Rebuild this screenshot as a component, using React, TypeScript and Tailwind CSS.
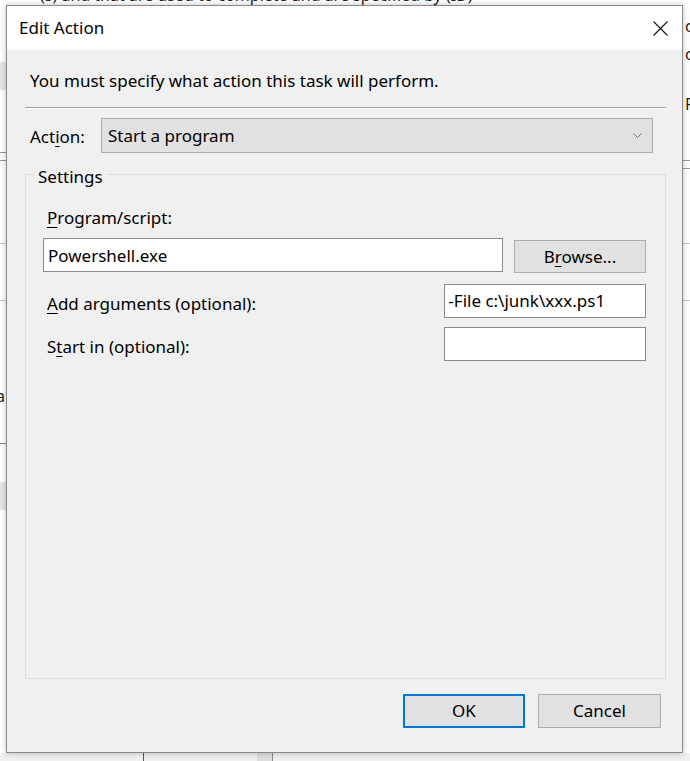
import React from "react";

function Mn({ children }: { children: React.ReactNode }) {
  return <span className="underline decoration-1 underline-offset-[3px]">{children}</span>;
}

export default function App() {
  return (
    <div className="relative w-[690px] h-[761px] overflow-hidden bg-white font-['Noto_Sans',sans-serif] text-[17px] text-black">
      {/* background window fragments peeking around the dialog */}
      <div className="absolute left-0 top-[-17px] w-[690px] whitespace-nowrap pl-[40px] text-[16px] leading-[24px] text-[#222]">
        (s)  and  that  are  used  to  complete  and  are  specified  by  (ID)
      </div>
      <div className="absolute left-0 top-[62px] h-[28px] w-[6px] bg-[#e6e6e6]" />
      <div className="absolute left-0 top-[152px] h-[1px] w-[6px] bg-[#9a9a9a]" />
      <div className="absolute left-0 top-[160px] h-[1px] w-[6px] bg-[#9a9a9a]" />
      <div className="absolute left-0 top-[243px] h-[1px] w-[6px] bg-[#c8c8c8]" />
      <div className="absolute left-0 top-[300px] h-[1px] w-[6px] bg-[#c8c8c8]" />
      <div className="absolute left-0 top-[386px] text-[16px] leading-[20px] text-[#222] -ml-[4px]">a</div>
      <div className="absolute left-0 top-[443px] h-[1px] w-[6px] bg-[#8a8a8a]" />
      <div className="absolute left-0 top-[482px] h-[28px] w-[6px] bg-[#e6e6e6]" />
      <div className="absolute left-[685px] top-[16px] text-[16px] leading-[20px] text-[#222]">c</div>
      <div className="absolute left-[685px] top-[44px] text-[16px] leading-[20px] text-[#222]">c</div>
      <div className="absolute left-[685px] top-[94px] text-[16px] leading-[20px] text-[#222]">F</div>
      <div className="absolute left-[683px] top-[160px] h-[1px] w-[7px] bg-[#9a9a9a]" />
      <div className="absolute left-[683px] top-[168px] h-[1px] w-[7px] bg-[#9a9a9a]" />
      <div className="absolute left-[683px] top-[243px] h-[1px] w-[7px] bg-[#c8c8c8]" />
      <div className="absolute left-[683px] top-[300px] h-[1px] w-[7px] bg-[#c8c8c8]" />
      <div className="absolute left-[0px] top-[753px] h-[8px] w-[690px] bg-[#f0f0f0]" />
      <div className="absolute left-[143px] top-[753px] h-[8px] w-[1px] bg-[#555]" />
      <div className="absolute left-[257px] top-[753px] h-[8px] w-[16px] bg-[#dedede]" />
      <div className="absolute left-[272px] top-[753px] h-[8px] w-[1px] bg-[#888]" />

      {/* dialog window */}
      <div className="absolute left-[6px] top-[5px] w-[677px] h-[748px] border border-[#8a8a8a] bg-[#f0f0f0] shadow-[0_0_6px_rgba(0,0,0,0.25)] flex flex-col">
        {/* title bar */}
        <div className="h-[44px] shrink-0 bg-white flex items-center justify-between pl-[12px] pr-[14px]">
          <span className="leading-[24px]">Edit Action</span>
          <svg width="15" height="15" viewBox="0 0 15 15" className="block">
            <path d="M0.5 0.5 L14.5 14.5 M14.5 0.5 L0.5 14.5" stroke="#111" strokeWidth="1.1" fill="none" />
          </svg>
        </div>

        {/* body */}
        <div className="flex-1 flex flex-col pl-[18px] pr-[16px]">
          <p className="mt-[19px] pl-[5px] leading-[24px]">You must specify what action this task will perform.</p>
          <div className="mt-[14px] h-[2px] border-t border-t-[#a0a0a0] border-b border-b-white" />

          <div className="mt-[9px] flex items-center">
            <span className="w-[76px] pl-[5px] leading-[24px] mt-[2px]">
              Act<Mn>i</Mn>on:
            </span>
            <div className="w-[552px] h-[35px] border border-[#adadad] bg-[#e1e1e1] flex items-center justify-between pl-[6px] pr-[10px]">
              <span className="leading-[24px]">Start a program</span>
              <svg width="9" height="5" viewBox="0 0 9 5" className="block">
                <path d="M0.5 0.5 L4.5 4.5 L8.5 0.5" stroke="#707070" strokeWidth="1" fill="none" />
              </svg>
            </div>
          </div>

          {/* settings group */}
          <div className="relative mt-[21px] h-[505px] border border-[#dcdcdc] pt-[31px] pl-[17px] pr-[19px]">
            <span className="absolute left-[8px] top-[-10px] px-[4px] bg-[#f0f0f0] leading-[24px]">Settings</span>

            <div className="pl-[4px] leading-[24px]">
              <Mn>P</Mn>rogram/script:
            </div>
            <div className="mt-[8px] flex items-start">
              <div className="w-[460px] h-[34px] border border-[#8c8c8c] bg-white flex items-center pl-[4px] pt-[2px]">
                <span className="leading-[24px]">Powershell.exe</span>
              </div>
              <div className="ml-[11px] mt-[2px] w-[132px] h-[33px] border border-[#adadad] bg-[#e1e1e1] flex items-center justify-center">
                <span className="leading-[24px]">
                  B<Mn>r</Mn>owse...
                </span>
              </div>
            </div>

            <div className="mt-[11px] flex items-center">
              <span className="w-[402px] pl-[4px] pt-[5px] leading-[24px]">
                <Mn>A</Mn>dd arguments (optional):
              </span>
              <div className="w-[202px] h-[34px] border border-[#8c8c8c] bg-white flex items-center pl-[3px]">
                <span className="leading-[24px]">-File c:\junk\xxx.ps1</span>
              </div>
            </div>

            <div className="mt-[9px] flex items-center">
              <span className="w-[402px] pl-[4px] pt-[6px] leading-[24px]">
                S<Mn>t</Mn>art in (optional):
              </span>
              <div className="w-[202px] h-[34px] border border-[#8c8c8c] bg-white" />
            </div>
          </div>

          {/* buttons */}
          <div className="mt-[15px] flex justify-end gap-[13px] pr-[5px]">
            <div className="w-[122px] h-[34px] border-2 border-[#0078d7] bg-[#e1e1e1] flex items-center justify-center">
              <span className="leading-[24px]">OK</span>
            </div>
            <div className="w-[123px] h-[34px] border border-[#adadad] bg-[#e1e1e1] flex items-center justify-center">
              <span className="leading-[24px]">Cancel</span>
            </div>
          </div>
        </div>
      </div>
    </div>
  );
}
